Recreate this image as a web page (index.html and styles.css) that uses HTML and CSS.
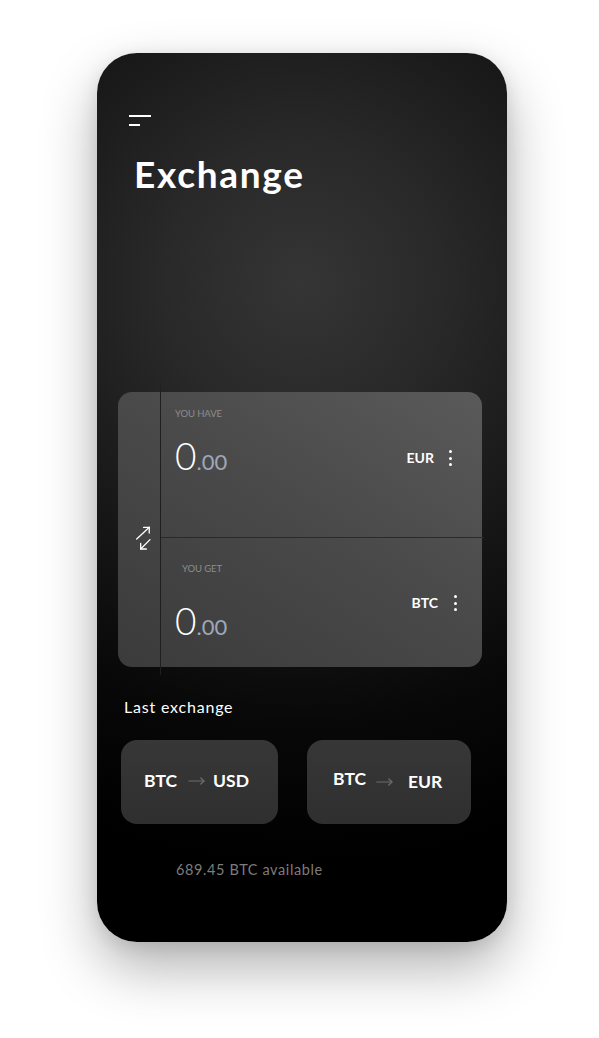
FILE: index.html
```html
<!DOCTYPE html>
<html lang="en">
<head>
<meta charset="utf-8">
<title>Exchange</title>
<link rel="stylesheet" href="styles.css">
</head>
<body>
<div class="phone">
  <div class="menu" aria-label="Menu">
    <span class="bar bar-long"></span>
    <span class="bar bar-short"></span>
  </div>
  <h1 class="title">Exchange</h1>

  <section class="card">
    <div class="swap-col">
      <svg class="swap" width="20" height="26" viewBox="0 0 20 26" fill="none" stroke="#fff" stroke-width="1.3" stroke-linecap="round" stroke-linejoin="round">
        <path d="M2.7 14 L15.3 2.3"/>
        <path d="M9.6 2.4 L15.3 2.3 L15.2 8"/>
        <path d="M16 14.6 L6.7 24"/>
        <path d="M6.7 18.4 L6.7 24 L12.4 24"/>
      </svg>
    </div>
    <div class="pane pane-have">
      <div class="label">You have</div>
      <div class="row">
        <div class="amount">0<span class="dec">.00</span></div>
        <div class="currency">
          <span class="code">EUR</span>
          <span class="kebab"><i></i><i></i><i></i></span>
        </div>
      </div>
    </div>
    <div class="pane pane-get">
      <div class="label">You get</div>
      <div class="row">
        <div class="amount">0<span class="dec">.00</span></div>
        <div class="currency">
          <span class="code">BTC</span>
          <span class="kebab"><i></i><i></i><i></i></span>
        </div>
      </div>
    </div>
  </section>

  <h2 class="section-title">Last exchange</h2>
  <div class="pairs">
    <button class="pair pair-usd">
      <span class="from">BTC</span>
      <svg class="arrow" width="17" height="8" viewBox="0 0 17 8" fill="none" stroke="#6e6e6e" stroke-width="1.2" stroke-linecap="round" stroke-linejoin="round"><path d="M0.8 4 H16"/><path d="M12.8 1 L16 4 L12.8 7"/></svg>
      <span class="to">USD</span>
    </button>
    <button class="pair pair-eur">
      <span class="from">BTC</span>
      <svg class="arrow" width="17" height="8" viewBox="0 0 17 8" fill="none" stroke="#6e6e6e" stroke-width="1.2" stroke-linecap="round" stroke-linejoin="round"><path d="M0.8 4 H16"/><path d="M12.8 1 L16 4 L12.8 7"/></svg>
      <span class="to">EUR</span>
    </button>
  </div>

  <p class="available">689.45 BTC available</p>
</div>
</body>
</html>
```
FILE: styles.css
```css
* { box-sizing: border-box; }

html, body {
  margin: 0;
  padding: 0;
  background: #ffffff;
}

html { height: 100%; }

body {
  min-height: 100%;
  font-family: "Lato", "Open Sans", "Liberation Sans", sans-serif;
  overflow: hidden;
  padding: 53px 0 0 97px;
}

.phone {
  width: 410px;
  height: 889px;
  border-radius: 40px;
  padding-top: 62px;
  display: flex;
  flex-direction: column;
  background:
    radial-gradient(circle at 205px 230px, #353535 0, #292929 140px, #181818 290px, #080808 440px, #000 580px);
  box-shadow: 0 26px 56px rgba(0, 0, 0, 0.30), 0 4px 18px rgba(0, 0, 0, 0.10);
  color: #fff;
}

/* menu */
.menu {
  margin-left: 32px;
  display: flex;
  flex-direction: column;
  gap: 7px;
}
.bar {
  display: block;
  height: 2px;
  background: #fff;
}
.bar-long { width: 22px; }
.bar-short { width: 11px; }

.title {
  margin: 28px 0 0 37px;
  font-size: 37px;
  line-height: 40px;
  font-weight: 700;
  letter-spacing: 1.7px;
}

/* card */
.card {
  position: relative;
  margin: 198px 0 0 21px;
  width: 364px;
  height: 275px;
  border-radius: 14px;
  background: linear-gradient(212deg, #5a5a5a 0%, #4a4a4a 45%, #3b3b3b 100%);
  display: grid;
  grid-template-columns: 42px 1fr;
  grid-template-rows: 145px 130px;
}
.card::before {
  content: "";
  position: absolute;
  left: 42px;
  top: -7px;
  bottom: -8px;
  width: 1px;
  background: #1f1f1f;
}

.swap-col {
  grid-column: 1;
  grid-row: 1 / span 2;
  padding: 133px 0 0 16px;
}
.swap { display: block; }

.pane {
  grid-column: 2;
  display: flex;
  flex-direction: column;
}
.pane-have {
  grid-row: 1;
  padding: 16px 30px 0 15px;
}
.pane-get {
  grid-row: 2;
  border-top: 1px solid #2a2a2a;
  margin-right: -2px;
  padding: 25px 27px 0 15px;
}

.label {
  font-size: 9.5px;
  line-height: 12px;
  color: #8d8d8d;
  text-transform: uppercase;
  letter-spacing: -0.1px;
}
.pane-get .label { padding-left: 7px; }

.row {
  display: flex;
  justify-content: space-between;
  align-items: flex-start;
  margin-top: 18px;
}
.pane-get .row { margin-top: 28px; }

.amount {
  font-size: 37px;
  line-height: 36px;
  font-weight: 300;
  color: #fff;
}
.dec {
  font-size: 22px;
  color: #9ea7ba;
  font-weight: 400;
}

.currency {
  display: flex;
  align-items: center;
  gap: 15px;
  margin-top: 12px;
}
.pane-get .currency { margin-top: -8px; gap: 16px; }

.code {
  font-size: 14px;
  line-height: 16px;
  font-weight: 700;
}

.kebab {
  display: flex;
  flex-direction: column;
  gap: 3.5px;
}
.kebab i {
  display: block;
  width: 3px;
  height: 3px;
  border-radius: 50%;
  background: #fff;
}

/* last exchange */
.section-title {
  margin: 30px 0 0 27px;
  font-size: 16px;
  line-height: 20px;
  font-weight: 400;
  letter-spacing: 0.8px;
}

.pairs {
  display: flex;
  gap: 29px;
  margin: 23px 0 0 24px;
}

.pair {
  height: 84px;
  border: 0;
  border-radius: 16px;
  background: linear-gradient(180deg, #373737 0%, #2f2f2f 100%);
  color: #fff;
  font-family: inherit;
  font-size: 17.5px;
  line-height: 20px;
  font-weight: 700;
  display: flex;
  align-items: flex-start;
  padding: 0;
  text-align: left;
}
.pair-usd { width: 157px; padding: 31px 0 0 23px; }
.pair-eur { width: 164px; padding: 29px 0 0 26px; }

.pair-usd .arrow { margin: 6px 8px 0 11px; }
.pair-eur .arrow { margin: 9px 15px 0 10px; }
.pair-eur .to { margin-top: 3px; }

.available {
  margin: 37px 0 0 79px;
  font-size: 14.5px;
  line-height: 18px;
  color: #7c7c7c;
  letter-spacing: 0.6px;
}
```
